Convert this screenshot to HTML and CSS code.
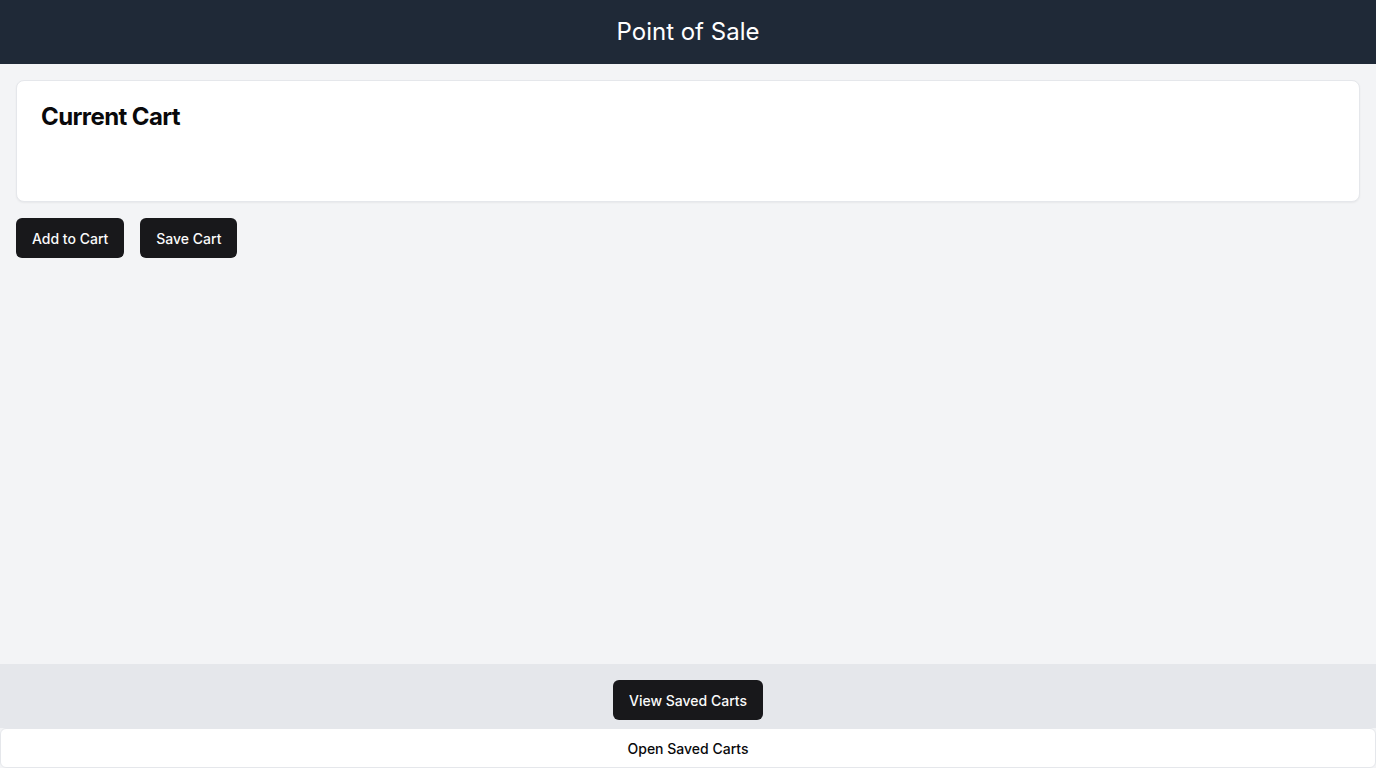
FILE: index.html
```html
<!DOCTYPE html>
<html lang="en">
<head>
<meta charset="utf-8">
<title>Point of Sale</title>
<link rel="stylesheet" href="styles.css">
</head>
<body>
<div class="app">
  <header class="topbar">
    <h1 class="title">Point of Sale</h1>
  </header>
  <main class="main">
    <section class="card">
      <h2 class="card-title">Current Cart</h2>
      <div class="cart-items"></div>
    </section>
    <div class="actions">
      <button class="btn">Add to Cart</button>
      <button class="btn">Save Cart</button>
    </div>
  </main>
  <footer class="footer">
    <button class="btn">View Saved Carts</button>
  </footer>
  <div class="drawer">
    <span class="drawer-label">Open Saved Carts</span>
  </div>
</div>
</body>
</html>
```

FILE: styles.css
```css
* { box-sizing: border-box; }
html, body { margin: 0; padding: 0; height: 100%; }
body {
  font-family: Inter, "Noto Sans", sans-serif;
  background: #f3f4f6;
  color: #09090b;
}
.app {
  display: flex;
  flex-direction: column;
  height: 100vh;
}
.topbar {
  height: 64px;
  flex: 0 0 64px;
  background: #1f2937;
  display: flex;
  align-items: center;
  justify-content: center;
}
.title {
  margin: 0;
  color: #ffffff;
  font-size: 24px;
  font-weight: 400;
  line-height: 32px;
}
.main {
  flex: 1;
  padding: 16px;
  display: flex;
  flex-direction: column;
  gap: 16px;
}
.card {
  background: #ffffff;
  border: 1px solid #e5e7eb;
  border-radius: 8px;
  box-shadow: 0 1px 2px rgba(0,0,0,0.05);
  padding: 24px;
}
.card-title {
  margin: 0;
  font-size: 24px;
  font-weight: 700;
  line-height: 24px;
  letter-spacing: -0.6px;
  color: #09090b;
}
.cart-items {
  height: 48px;
}
.actions {
  display: flex;
  gap: 16px;
}
.btn {
  height: 40px;
  padding: 0 16px;
  background: #18181b;
  color: #fafafa;
  border: none;
  border-radius: 6px;
  font-family: Inter, "Noto Sans", sans-serif;
  font-size: 14px;
  font-weight: 500;
  cursor: pointer;
}
.footer {
  flex: 0 0 64px;
  background: #e5e7eb;
  display: flex;
  align-items: flex-start;
  justify-content: center;
  padding: 16px 0 8px;
}
.drawer {
  flex: 0 0 40px;
  background: #ffffff;
  border: 1px solid #e5e7eb;
  border-radius: 6px;
  display: flex;
  align-items: center;
  justify-content: center;
}
.drawer-label {
  font-size: 14px;
  font-weight: 500;
  color: #09090b;
}
```
